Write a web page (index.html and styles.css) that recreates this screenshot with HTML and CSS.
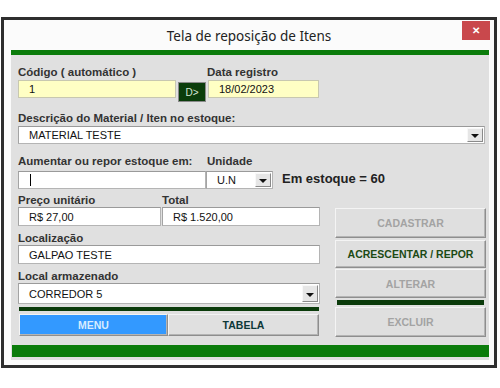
FILE: index.html
```html
<!DOCTYPE html>
<html>
<head>
<meta charset="UTF-8">
<title>Tela de reposição de Itens</title>
<link rel="stylesheet" href="styles.css">
</head>
<body>
<div class="janela">
    <div class="titulo">
        <span class="titulo-tekst">Tela de reposição de Itens</span>
        <span class="fechar">&#x2715;</span>
    </div>
    <div class="cliente">
        <div class="painel">
            <div class="faixa-topo"></div>
            <div class="form">
                <div class="linha rot r1">
                    <span class="w189">Código ( automático )</span>
                    <span>Data registro</span>
                </div>
                <div class="linha r2">
                    <div class="campo amarelo w158">1</div>
                    <div class="knop-d">D&gt;</div>
                    <div class="campo amarelo w111">18/02/2023</div>
                </div>
                <div class="linha rot r3">Descrição do Material / Iten no estoque:</div>
                <div class="combo w467 r4">
                    <span class="combo-tekst">MATERIAL TESTE</span>
                    <span class="seta"><i></i></span>
                </div>
                <div class="linha rot r5">
                    <span class="w189">Aumentar ou repor estoque em:</span>
                    <span>Unidade</span>
                </div>
                <div class="linha r6">
                    <div class="campo w188"><span class="cursor"></span></div>
                    <div class="combo w67">
                        <span class="combo-tekst">U.N</span>
                        <span class="seta"><i></i></span>
                    </div>
                    <div class="estoque">Em estoque = 60</div>
                </div>

                <div class="baixo">
                    <div class="esq">
                        <div class="linha rot">
                            <span class="w144">Preço unitário</span>
                            <span>Total</span>
                        </div>
                        <div class="linha">
                            <div class="campo w143 h19">R$ 27,00</div>
                            <div class="campo w158 h19 ml1">R$ 1.520,00</div>
                        </div>
                        <div class="linha rot m5">Localização</div>
                        <div class="campo w302 h19">GALPAO TESTE</div>
                        <div class="linha rot m5">Local armazenado</div>
                        <div class="combo w302 h21">
                            <span class="combo-tekst">CORREDOR 5</span>
                            <span class="seta"><i></i></span>
                        </div>
                        <div class="faixa-escura esq-faixa"></div>
                        <div class="linha abas">
                            <div class="aba menu">MENU</div>
                            <div class="aba tabela">TABELA</div>
                        </div>
                    </div>
                    <div class="dir">
                        <div class="botao inativo h30">CADASTRAR</div>
                        <div class="botao ativo h28 mt2">ACRESCENTAR / REPOR</div>
                        <div class="botao inativo h29 mt1">ALTERAR</div>
                        <div class="faixa-escura dir-faixa"></div>
                        <div class="botao inativo h30 mt2">EXCLUIR</div>
                    </div>
                </div>
            </div>
            <div class="faixa-baixo"></div>
        </div>
    </div>
</div>
</body>
</html>
```

FILE: styles.css
```css
body {
    margin: 0;
    background: #fff;
    font-family: "Liberation Sans", Arial, sans-serif;
}
.janela {
    margin: 17px 0 0 1px;
    width: 490px;
    border: 3px solid #2e2e2e;
    background: #fbfbfb;
}
.titulo {
    position: relative;
    height: 30px;
    display: flex;
    align-items: center;
    justify-content: center;
}
.titulo-tekst {
    font-family: "Noto Sans", sans-serif;
    font-size: 13.5px;
    color: #222;
    margin-top: 2px;
}
.fechar {
    position: absolute;
    right: 4px;
    top: 1px;
    width: 28px;
    height: 19px;
    background: #c9484c;
    color: #fff;
    font-size: 10px;
    font-weight: bold;
    display: flex;
    align-items: center;
    justify-content: center;
}
.cliente {
    padding: 0 5px 5px 7px;
}
.painel {
    background: #e0e0e0;
    padding-bottom: 3px;
}
.faixa-topo {
    height: 5px;
    background: #0b7c0b;
}
.faixa-baixo {
    height: 12px;
    margin: 8px 0 0 1px;
    background: #0b7c0b;
}
.form {
    padding: 0 0 0 7px;
}
.linha {
    display: flex;
}
.rot {
    font-size: 11.5px;
    font-weight: bold;
    color: #333;
    line-height: 14px;
}
.r1 { margin-top: 10px; }
.r2 { margin-top: 1px; }
.r3 { margin-top: 9px; }
.r4 { margin-top: 1px; }
.r5 { margin-top: 10px; }
.r6 { margin-top: 3px; align-items: flex-start; }
.m5 { margin-top: 5px; }
.mt1 { margin-top: 1px; }
.mt2 { margin-top: 2px; }
.ml1 { margin-left: 1px; }

.w189 { width: 189px; }
.w144 { width: 144px; }
.w158 { width: 158px; }
.w111 { width: 111px; }
.w467 { width: 467px; }
.w188 { width: 188px; }
.w67 { width: 67px; }
.w143 { width: 143px; }
.w302 { width: 302px; }
.h19 { height: 19px !important; }
.h21 { height: 21px !important; }
.h28 { height: 28px; }
.h29 { height: 29px; }
.h30 { height: 30px; }

.campo, .combo {
    box-sizing: border-box;
    height: 18px;
    background: #fff;
    border: 1px solid #b4b4b4;
    border-top-color: #9a9a9a;
    border-left-color: #a4a4a4;
    font-size: 11px;
    color: #111;
    padding-left: 10px;
    display: flex;
    align-items: center;
}
.amarelo {
    background: #ffffc4;
    border-color: #c8c8b0;
}
.knop-d {
    box-sizing: border-box;
    width: 28px;
    height: 20px;
    margin: 2px 2px 0 2px;
    background: #0b3d0b;
    color: #d8e8d8;
    font-size: 10px;
    display: flex;
    align-items: center;
    justify-content: center;
    border: 1px solid #8a8a8a;
}
.cursor {
    width: 0;
    height: 12px;
    border-left: 1px solid #000;
    margin-left: 1px;
}
.combo {
    justify-content: space-between;
    padding-right: 1px;
}
.combo-tekst {
    line-height: 14px;
}
.seta {
    box-sizing: border-box;
    width: 16px;
    height: calc(100% - 2px);
    background: #e6e6e6;
    border: 1px solid;
    border-color: #f8f8f8 #8a8a8a #8a8a8a #f8f8f8;
    display: flex;
    align-items: center;
    justify-content: center;
}
.seta i {
    width: 0;
    height: 0;
    border-left: 4px solid transparent;
    border-right: 4px solid transparent;
    border-top: 4px solid #111;
    margin-top: 2px;
}
.estoque {
    margin-left: 9px;
    font-size: 13px;
    font-weight: bold;
    color: #222;
    line-height: 16px;
}

.baixo {
    display: grid;
    grid-template-columns: 302px 151px;
    column-gap: 15px;
    margin-top: 4px;
}
.dir {
    margin-top: 15px;
}
.faixa-escura {
    background: #0b3b0b;
}
.esq-faixa {
    height: 4px;
    margin: 3px 1px 0 1px;
}
.dir-faixa {
    height: 5px;
    margin: 2px 2px 0 2px;
}
.abas {
    margin-top: 3px;
    padding-left: 1px;
}
.aba, .botao {
    box-sizing: border-box;
    display: flex;
    align-items: center;
    justify-content: center;
    font-size: 10.5px;
    font-weight: bold;
    border: 1px solid;
    border-color: #f4f4f4 #8e8e8e #8e8e8e #f4f4f4;
    box-shadow: inset -1px -1px #b4b4b4;
}
.aba {
    height: 22px;
}
.menu {
    width: 149px;
    background: #3399ff;
    color: #d6ecff;
}
.tabela {
    width: 151px;
    background: #e0e0e0;
    color: #0d3838;
}
.botao {
    background: #dfdfdf;
}
.inativo {
    color: #a3a3a3;
}
.ativo {
    color: #1c4a14;
}
```
